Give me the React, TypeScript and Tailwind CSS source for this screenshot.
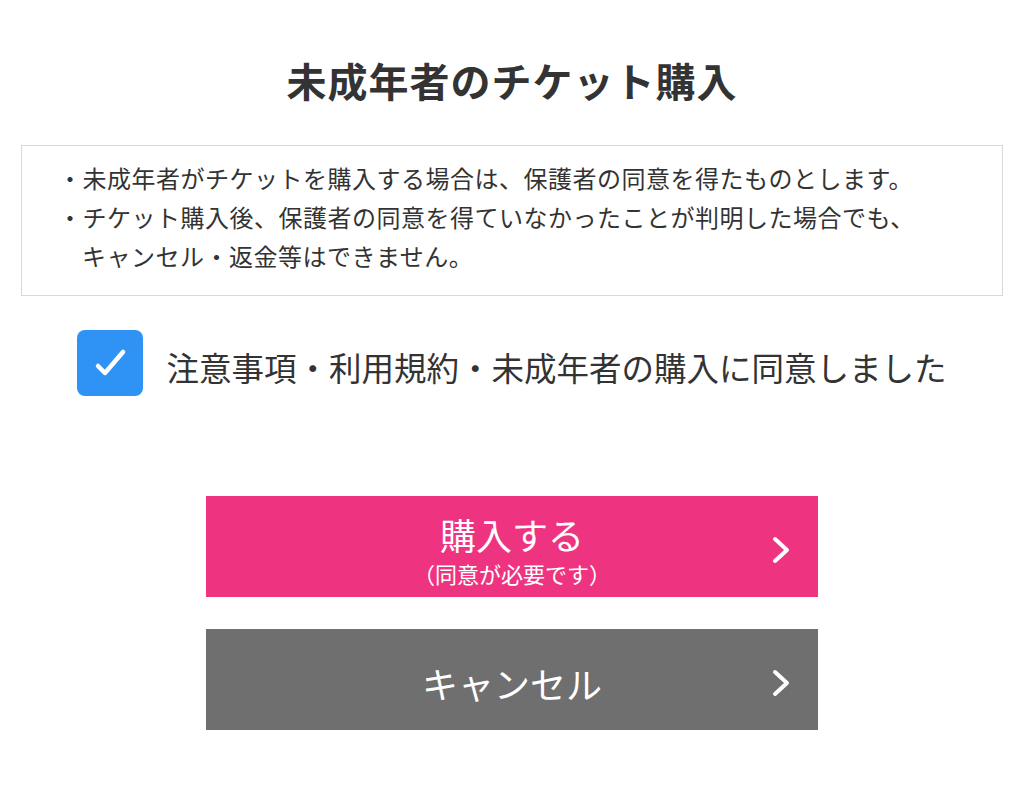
import React from "react";

const jp = { fontFamily: '"Noto Sans CJK JP", "Noto Sans", sans-serif' };

function Chevron() {
  return (
    <svg width="20" height="28" viewBox="0 0 20 28" className="absolute right-[27px] top-[calc(50%+3px)] -translate-y-1/2">
      <path d="M4 3 L16 14 L4 25" fill="none" stroke="#ffffff" strokeWidth="4" strokeLinecap="round" strokeLinejoin="round" />
    </svg>
  );
}

export default function App() {
  return (
    <div className="w-[1024px] h-[792px] bg-white text-[#333333] flex flex-col items-center" style={jp}>
      <h1 className="mt-[56px] text-[40px] leading-[48px] font-bold tracking-[1px]">未成年者のチケット購入</h1>

      <div className="mt-[41px] w-[982px] h-[151px] border border-[#d3dbda] pl-[36px] pt-[12px] text-[24px] leading-[39px] tracking-[0.5px]">
        <p>・未成年者がチケットを購入する場合は、保護者の同意を得たものとします。</p>
        <p>・チケット購入後、保護者の同意を得ていなかったことが判明した場合でも、</p>
        <p className="pl-[24px]">キャンセル・返金等はできません。</p>
      </div>

      <label className="mt-[34px] flex items-center gap-[23px]">
        <span className="w-[66px] h-[66px] rounded-[8px] bg-[#2f93f6] flex items-center justify-center">
          <svg width="66" height="66" viewBox="0 0 66 66">
            <path d="M21 36 L28 43 L46 22" fill="none" stroke="#ffffff" strokeWidth="4.5" strokeLinecap="round" strokeLinejoin="round" />
          </svg>
        </span>
        <span className="text-[32.5px] leading-[44px] pt-[8px]">注意事項・利用規約・未成年者の購入に同意しました</span>
      </label>

      <button className="relative mt-[100px] w-[612px] h-[101px] bg-[#ee3480] text-white flex flex-col items-center pt-[18px]">
        <span className="text-[36px] leading-[40px]">購入する</span>
        <span className="mt-[6px] text-[22px] leading-[26px]">（同意が必要です）</span>
        <Chevron />
      </button>

      <button className="relative mt-[32px] w-[612px] h-[101px] bg-[#6f6f6f] text-white flex items-center justify-center pt-[6px]">
        <span className="text-[36px] leading-[40px]">キャンセル</span>
        <Chevron />
      </button>
    </div>
  );
}
